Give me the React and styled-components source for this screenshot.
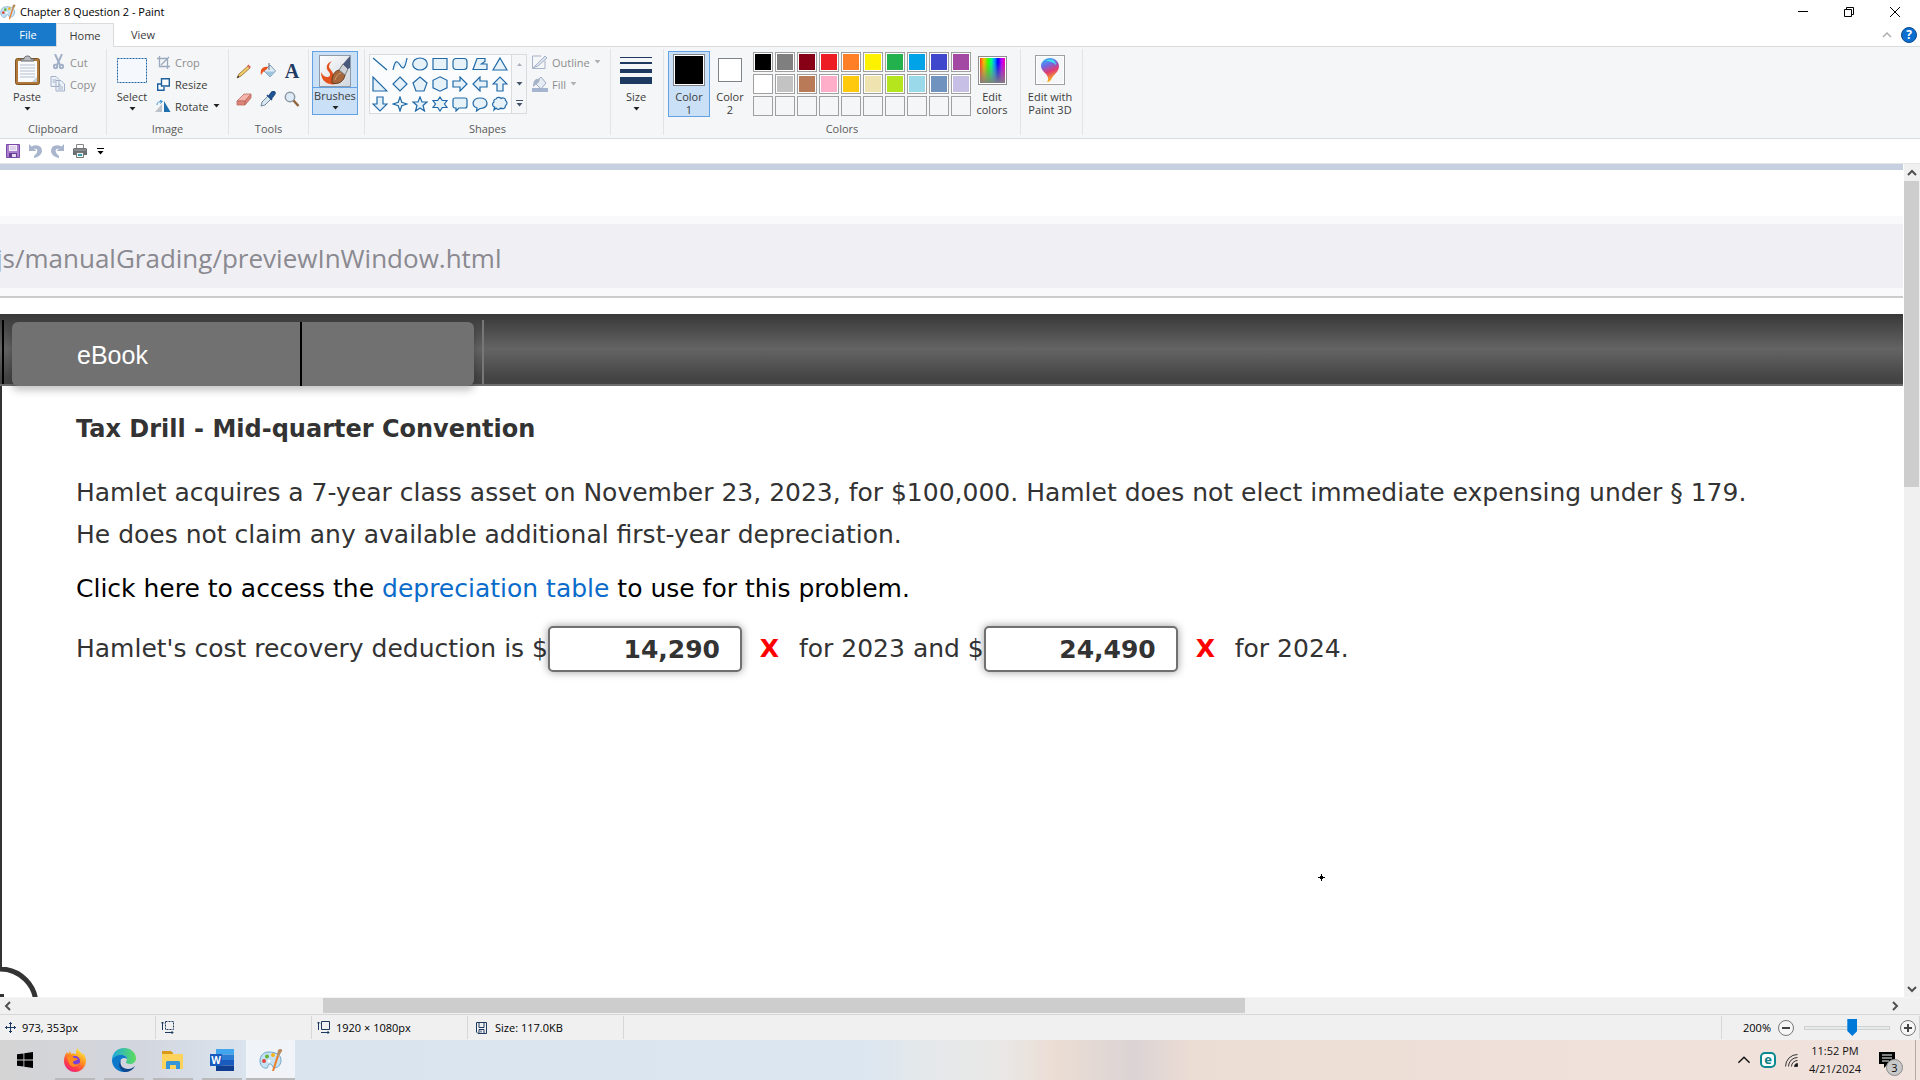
import React from "react";
import styled, { createGlobalStyle, css } from "styled-components";

const ui = '"Open Sans", "Noto Sans", sans-serif';
const page = '"DejaVu Sans", sans-serif';

const GlobalStyle = createGlobalStyle`
  *, *::before, *::after { box-sizing: border-box; }
  body { margin: 0; overflow: hidden; background: #fff; }
  button { font: inherit; color: inherit; background: none; border: 0; padding: 0; margin: 0; }
  h1, p { margin: 0; font: inherit; }
  svg { display: block; flex: none; }
`;

const Window = styled.div`
  display: flex;
  flex-direction: column;
  height: 100vh;
  font-family: ${ui};
  font-size: 11px;
  color: #1e1e1e;
  background: #fff;
`;

/* Title bar */
const TitleBar = styled.header`
  display: flex;
  align-items: center;
  flex: none;
  height: 23px;
  padding-right: 2px;
  gap: 4px;
`;
const WindowTitle = styled.h1`
  flex: 1;
  color: #000;
`;
const Controls = styled.div`
  display: flex;
`;
const ControlButton = styled.button`
  display: flex;
  align-items: center;
  justify-content: center;
  width: 46px;
  height: 21px;
`;

/* Ribbon tabs */
const TabBar = styled.nav`
  display: flex;
  align-items: stretch;
  flex: none;
  height: 24px;
  border-bottom: 1px solid #dadbdc;
`;
const Tab = styled.button`
  width: ${(p) => (p.$file ? 56 : 58)}px;
  color: ${(p) => (p.$file ? "#fff" : "#3b3b3b")};
  ${(p) => p.$file && css`background: #1979ca;`}
  ${(p) =>
    p.$active &&
    css`
      background: #f5f6f7;
      border: 1px solid #dadbdc;
      border-bottom: 0;
      margin-bottom: -1px;
    `}
`;
const TabTools = styled.div`
  display: flex;
  align-items: center;
  gap: 9px;
  margin-left: auto;
  padding-right: 3px;
`;
const HelpButton = styled.button`
  width: 16px;
  height: 16px;
  border-radius: 50%;
  border: 1px solid #0a4a8c;
  background: #0a6fd0;
  color: #fff;
  font-weight: 700;
  font-size: 12px;
  line-height: 14px;
`;

/* Ribbon */
const Ribbon = styled.div`
  display: flex;
  flex: none;
  height: 92px;
  padding: 2px 0 3px;
  background: #f5f6f7;
  border-bottom: 1px solid #dadbdc;
`;
const Group = styled.section`
  display: flex;
  flex-direction: column;
  width: ${(p) => p.$w}px;
  padding-top: 2px;
  border-right: 1px solid #e2e3e4;
`;
const GroupBody = styled.div`
  display: flex;
  flex: 1;
  padding: 0 ${(p) => p.$pad || 3}px;
  gap: ${(p) => p.$gap || 0}px;
`;
const GroupLabel = styled.div`
  line-height: 12px;
  text-align: center;
  color: #5a5a5a;
`;
const BigButton = styled.button`
  display: flex;
  flex-direction: column;
  align-items: center;
  width: ${(p) => p.$w || 44}px;
  height: ${(p) => (p.$split ? 64 : 66)}px;
  padding-top: 2px;
  line-height: 13px;
  color: #3b3b3b;
  border: 1px solid ${(p) => (p.$on ? "#62a2e4" : "transparent")};
  background: ${(p) => (p.$on ? "#c9e0f7" : "none")};
`;
const BigIcon = styled.span`
  display: flex;
  align-items: center;
  justify-content: center;
  width: 100%;
  height: ${(p) => (p.$split ? 35 : 32)}px;
  margin-bottom: ${(p) => (p.$split ? 1 : 4)}px;
  ${(p) => p.$split && css`border-bottom: 1px solid #62a2e4;`}
`;
const ArrowLine = styled.span`
  display: flex;
  align-items: center;
  height: 12px;
`;
const SmallColumn = styled.div`
  display: flex;
  flex-direction: column;
  padding-left: ${(p) => p.$left || 0}px;
`;
const SmallButton = styled.button`
  display: flex;
  align-items: center;
  gap: 4px;
  height: 22px;
  white-space: nowrap;
  color: ${(p) => (p.$off ? "#8d8d8d" : "#3b3b3b")};
`;
const IconSlot = styled.span`
  display: flex;
  justify-content: center;
  width: 16px;
`;
const ToolGrid = styled.div`
  display: grid;
  grid-template-columns: repeat(3, 24px);
  grid-auto-rows: 28px;
  padding-top: 6px;
`;
const ToolButton = styled.button`
  display: flex;
  align-items: center;
  justify-content: center;
`;
const Gallery = styled.div`
  display: flex;
  width: 158px;
  height: 60px;
  margin-top: 3px;
  background: #fbfcfd;
  border: 1px solid #dadbdc;
`;
const ShapeGrid = styled.div`
  display: grid;
  flex: 1;
  grid-template-columns: repeat(7, 20px);
  grid-auto-rows: 20px;
  margin-top: -1px;
`;
const GalleryScroll = styled.div`
  display: flex;
  flex-direction: column;
  width: 15px;
  background: #f5f6f7;
  border-left: 1px solid #dadbdc;
`;
const GalleryStep = styled.button`
  display: flex;
  align-items: center;
  justify-content: center;
  flex: 1;
`;
const Chip = styled.span`
  width: ${(p) => p.$size}px;
  height: ${(p) => p.$size}px;
  border: 1px solid #808488;
  background: ${(p) => p.$c};
  box-shadow: inset 0 0 0 1px #fff;
`;
const Palette = styled.div`
  display: grid;
  grid-template-columns: repeat(10, 20px);
  grid-auto-rows: 20px;
  gap: 2px;
  padding-top: 1px;
`;
const Swatch = styled.button`
  border: 1px solid #a0a0a0;
  background: ${(p) => p.$c || "#f5f6f7"};
  box-shadow: inset 0 0 0 1px ${(p) => (p.$c ? "#fff" : "#f5f6f7")};
`;
const Spectrum = styled.span`
  width: 29px;
  height: 29px;
  border: 1px solid #8f8f8f;
  outline: 1px solid #fff;
  outline-offset: -2px;
  background:
    linear-gradient(transparent 20%, #808080),
    linear-gradient(90deg, #f22, #fb0 18%, #3f0 34%, #0f8 46%, #09f 58%, #00f 70%, #b0f 84%, #f08);
`;
const Frame3D = styled.span`
  display: flex;
  align-items: center;
  justify-content: center;
  width: 30px;
  height: 30px;
  border: 1px solid #a0a0a0;
  background: #f5f6f7;
  box-shadow: inset 0 0 0 1px #fff;
`;

/* Quick access */
const QuickBar = styled.div`
  display: flex;
  align-items: center;
  flex: none;
  gap: 9px;
  height: 25px;
  padding-left: 6px;
  border-bottom: 1px solid #e4e5e6;
`;

/* Workspace */
const Workspace = styled.main`
  display: flex;
  flex: 1;
  min-height: 0;
`;
const Canvas = styled.div`
  position: relative;
  flex: 1;
  min-width: 0;
  overflow: hidden;
  border-top: 6px solid #c7d0e1;
  background: #fff;
`;
const ScrollV = styled.div`
  display: flex;
  flex-direction: column;
  align-items: center;
  width: 17px;
  border-left: 1px solid #fff;
  background: #f0f0f0;
`;
const ScrollH = styled.div`
  display: flex;
  align-items: center;
  flex: none;
  height: 17px;
  padding-right: 17px;
  background: #f0f0f0;
  border-top: 1px solid #f5f5f5;
`;
const ScrollStep = styled.button`
  display: flex;
  align-items: center;
  justify-content: center;
  width: 16px;
  height: 17px;
  flex: none;
`;
const ScrollTrack = styled.div`
  display: flex;
  flex: 1;
  flex-direction: ${(p) => (p.$v ? "column" : "row")};
  align-self: stretch;
`;
const ScrollThumb = styled.div`
  flex: none;
  background: #cdcdcd;
  ${(p) =>
    p.$v
      ? css`height: 38.3%; width: 15px;`
      : css`width: 49.3%; height: 15px; margin-left: 16.4%;`}
`;

/* Picture on the canvas */
const AddressStrip = styled.div`
  display: flex;
  align-items: center;
  height: 82px;
  margin-top: 46px;
  border-top: 8px solid #f9f9fb;
  border-bottom: 2px solid #ccc;
  background: linear-gradient(#f0f0f4 64px, #f9f9fb 64px);
  padding-bottom: 4px;
`;
const Address = styled.span`
  margin-left: -4px;
  font-size: 26px;
  line-height: 64px;
  color: #8a8990;
`;
const BookBar = styled.div`
  display: flex;
  height: 72px;
  margin-top: 16px;
  padding: 6px 0 0 2px;
  background: linear-gradient(#383838, #646464 50%, #444 92%);
  border-bottom: 2px solid #6e6e6e;
`;
const BarLine = styled.span`
  width: 2px;
  height: 64px;
  background: ${(p) => p.$c};
`;
const BookTabs = styled.div`
  display: flex;
  width: 462px;
  height: 64px;
  margin: 2px 8px 0;
  border-radius: 6px;
  background: #717171;
  box-shadow: 0 4px 8px rgba(0, 0, 0, 0.25);
`;
const BookTab = styled.button`
  width: 288px;
  padding: 2px 0 0 65px;
  text-align: left;
  font-family: "Liberation Sans", Arial, sans-serif;
  font-size: 25px;
  color: #fff;
`;
const Paper = styled.article`
  display: flex;
  flex-direction: column;
  align-items: flex-start;
  padding: 22px 74px 0;
  margin-bottom: 4px;
  height: 582px;
  border-left: 2px solid #333;
  font-family: ${page};
  font-size: 25px;
  line-height: 42px;
  color: #333;
  white-space: nowrap;
`;
const Heading = styled.h2`
  margin: 0 0 22px;
  font-size: 24px;
  font-weight: 700;
`;
const Note = styled.p`
  margin-top: 12px;
  color: #000;
`;
const Link = styled.a`
  color: #0a6bcb;
  text-decoration: none;
`;
const AnswerRow = styled.div`
  display: flex;
  align-items: center;
  margin-top: 16px;
`;
const AnswerInput = styled.input`
  width: 194px;
  height: 46px;
  padding: 0 20px;
  border: 2px solid #707070;
  border-radius: 5px;
  box-shadow: 0 0 8px rgba(0, 0, 0, 0.4);
  font: 700 25px ${page};
  color: #333;
  text-align: right;
`;
const Wrong = styled.span`
  width: 57px;
  text-align: center;
  padding-right: 2px;
  font-weight: 700;
  color: #f00;
`;
const Overlay = styled.svg`
  position: absolute;
  ${(p) => p.$corner && css`left: 0; bottom: 0;`}
  ${(p) => p.$cursor && css`left: 1318px; top: 704px;`}
`;

/* Status bar */
const StatusBar = styled.footer`
  display: flex;
  flex: none;
  height: 26px;
  padding: 1px 0;
  border-top: 1px solid #d7d7d7;
  background: #f0f0f0;
  color: #000;
`;
const StatusCell = styled.div`
  display: flex;
  align-items: center;
  gap: 6px;
  width: 156px;
  padding-left: 5px;
  border-right: 1px solid #d7d7d7;
`;
const ZoomCell = styled.div`
  display: flex;
  align-items: center;
  gap: 7px;
  margin-left: auto;
  padding: 0 3px 0 21px;
  border-left: 1px solid #d7d7d7;
  border-right: 1px solid #d7d7d7;
`;
const ZoomSlider = styled.input`
  appearance: none;
  width: 86px;
  height: 18px;
  margin: 0 3px;
  background:
    linear-gradient(#e7eaea, #e7eaea) center / 84px 2px no-repeat,
    linear-gradient(#d0d0d0, #d0d0d0) center / 100% 4px no-repeat;
  &::-webkit-slider-thumb {
    appearance: none;
    width: 10px;
    height: 17px;
    background: #0078d7;
    clip-path: polygon(0 0, 100% 0, 100% 70%, 50% 100%, 0 70%);
  }
`;

/* Taskbar */
const Taskbar = styled.nav`
  display: flex;
  flex: none;
  height: 40px;
  background: linear-gradient(90deg, #d4d4d4, #d2d5de 7%, #dae4ee 13%, #dbe6f0 45%, #e4e8ea 48%, #e9e8e7 52%, #ebddd4 55%, #dbd4d4 59%, #ebdcd4 62%, #efe0d9 80%, #f0e2dc);
  color: #111;
`;
const TaskButton = styled.button`
  display: flex;
  align-items: center;
  justify-content: center;
  width: ${(p) => (p.$open || p.$active ? 49 : 50)}px;
  ${(p) =>
    p.$open &&
    css`
      background: linear-gradient(#b8babc, #b8babc) bottom / 40px 2px no-repeat;
    `}
  ${(p) =>
    p.$active &&
    css`
      background: #f0f4f9;
      border-bottom: 2px solid #b8babc;
      padding-top: 2px;
    `}
`;
const Tray = styled.div`
  display: flex;
  align-items: center;
  gap: 9px;
  margin-left: auto;
  padding-right: 4px;
`;
const Clock = styled.div`
  width: 56px;
  text-align: center;
  line-height: 18px;
`;
const Notify = styled.button`
  position: relative;
  width: 44px;
  height: 40px;
  padding-left: 7px;
  border-right: 1px solid #b5aaa6;
`;
const Badge = styled.span`
  position: absolute;
  left: 14px;
  top: 19px;
  width: 17px;
  height: 17px;
  border: 1px solid #8a8a8a;
  border-radius: 50%;
  background: #c9c9c9;
  line-height: 15px;
`;

/* Icons */
const Down = ({ c = "#222" }) => (
  <svg width="7" height="4"><path d="M0.500 0h6L3.500 3.500z" fill={c} /></svg>
);
const Chevron = ({ turn = 0, size = 10, c = "#505050", w = 2 }) => (
  <svg width={size} height={size} viewBox="0 0 10 10">
    <path d="M1 7l4-4 4 4" fill="none" stroke={c} strokeWidth={w} transform={`rotate(${turn} 5 5)`} />
  </svg>
);
const PaintIcon = ({ s = 16 }) => (
  <svg width={s} height={s} viewBox="0 0 24 24">
    <path d="M10 4C4 4 1 8 1 13c0 5 4 8 7 7 2-1 0-4 3-4 3 0 2 5 5 4 4-1 6-4 6-8 0-5-5-8-12-8z" fill="#c4e2f3" stroke="#6fa6c8" />
    <circle cx="5" cy="13" r="2" fill="#e2453b" /><circle cx="8" cy="8.500" r="2" fill="#63b33b" />
    <circle cx="14" cy="7" r="2" fill="#f4b41d" /><circle cx="10" cy="13" r="1.500" fill="#fff" />
    <path d="M13 23l5-16 2 1-5 15z" fill="#ec7f2c" /><path d="M18 7l1-5c2-2 5-1 4 1l-3 5z" fill="#b98b5e" />
  </svg>
);
const PasteIcon = () => (
  <svg width="25" height="31" viewBox="0 0 25 31">
    <rect x="0.500" y="3.500" width="24" height="26" rx="2" fill="#b0793a" stroke="#7d5424" />
    <path d="M3 6h19v21H3z" fill="#f8fafc" />
    <path d="M5 10h15M5 13h15M5 16h15M5 19h15M5 22h15" stroke="#b4c0d0" />
    <path d="M17 27l5-5v5z" fill="#c3cedd" />
    <path d="M6 6V4h3c0-4 7-4 7 0h3v2z" fill="#b8bcc2" stroke="#666" />
  </svg>
);
const CutIcon = () => (
  <svg width="11" height="16" viewBox="0 0 11 16" fill="none" stroke="#a3b1c8" strokeWidth="2">
    <path d="M2 0l5 11M9 0L4 11" /><circle cx="2.500" cy="12.500" r="1.700" /><circle cx="8.500" cy="12.500" r="1.700" />
  </svg>
);
const CopyIcon = () => (
  <svg width="16" height="16" viewBox="0 0 16 16" fill="#edf2f9" stroke="#a3b1c8">
    <path d="M1 .5h5l3 3v7H1zM6 4.500h5l3.500 3.500v7H6z" /><path d="M2.500 4h4M2.500 6h3M8 9h3M8 11h5M8 13h5" />
  </svg>
);
const CropIcon = () => (
  <svg width="13" height="13" viewBox="0 0 13 13" fill="none" stroke="#9ba9bd" strokeWidth="1.300">
    <path d="M2.500 0v10.500H13M0 2.500h10.500V13M4 9l8-8" />
  </svg>
);
const ResizeIcon = () => (
  <svg width="13" height="13" viewBox="0 0 13 13" fill="#fff" stroke="#1c5f9c" strokeWidth="1.400">
    <path d="M4 6H.7v6.300H7V9" /><path d="M4.500.7h7.800V8H4.500z" />
  </svg>
);
const RotateIcon = () => (
  <svg width="16" height="13" viewBox="0 0 16 13">
    <path d="M7 4v8H0z" fill="#bcc3ca" /><path d="M9 1l6.500 11H9z" fill="#1e6fae" />
    <path d="M2 5c0-3 2-3.500 5-3.500M5 0l2.500 1.500L5 3.500" fill="none" stroke="#3a94d8" />
  </svg>
);
const tools = {
  Pencil: <><path d="M1 15l2-4 9-8 2 2-9 8z" fill="#f3cc6a" stroke="#8e6a2e" strokeWidth=".8" /><path d="M11 3l1.500-1.500 2.500 2.500L13.500 5.500z" fill="#dc6b5b" /><path d="M1 15l1-2.500 1.500 1.500z" fill="#333" /></>,
  "Fill with color": <><path d="M4 8l6-6 5.500 6L10 14z" fill="#e0ecf5" stroke="#6d8ca8" strokeWidth=".9" /><path d="M4.500 8.500h10.500L10 14z" fill="#9dc3df" /><path d="M9 0v7" stroke="#667" /><path d="M8 4C2 3 0 7 1 12l2-3 4-3z" fill="#e9531f" /></>,
  Eraser: <><path d="M1 10l7-7h7l-6 7z" fill="#f4b6ac" stroke="#bd6c62" strokeWidth=".8" /><path d="M1 10h8v4H1zM9 10l6-7v4l-6 7z" fill="#dd8377" stroke="#bd6c62" strokeWidth=".8" /></>,
  "Color picker": <><path d="M1 15l1-4 6-6 3 3-6 6z" fill="#d9e7f2" stroke="#667c92" strokeWidth=".9" /><path d="M7 4l5 5M9 5l3-4c3-1 4 1 2 3l-3 4z" fill="#23589a" stroke="#1d4c86" strokeWidth="1.500" /></>,
  Magnifier: <><circle cx="6" cy="6" r="4.700" fill="#dcebf6" stroke="#8d9aa6" strokeWidth="1.500" /><path d="M9.500 9.500L14.500 15" stroke="#94643a" strokeWidth="2.500" /></>,
};
const Tool = ({ name }) => (
  <ToolButton aria-label={name}>
    <svg width="16" height="16" viewBox="0 0 16 16">{tools[name]}</svg>
  </ToolButton>
);
const TextTool = styled(ToolButton)`
  font: 700 20px "Liberation Serif", serif;
  color: #1f3b63;
`;
const BrushIcon = () => (
  <svg width="32" height="32" viewBox="0 0 32 32">
    <defs><linearGradient id="br" x2="1" y2="1"><stop stopColor="#fff" /><stop offset="1" stopColor="#cfd6dd" /></linearGradient></defs>
    <rect x=".5" y=".5" width="31" height="31" fill="url(#br)" stroke="#8f9aa6" />
    <path d="M13 6C6 9 7 14 10 17c2 3 1 5-2 5-3 0-5-3-6-5 0 6 3 11 9 12 4 1 7 0 8-3l-5-5c1-4-3-6-4-9 0-2 1-4 3-6z" fill="#e4521d" />
    <path d="M13 28c-1-7 3-13 8-13l5 5c-1 6-6 10-13 8z" fill="#a5673b" stroke="#6b3d1d" />
    <path d="M16 25c1-4 3-6 6-7" fill="none" stroke="#d09a6a" />
    <path d="M20 15l4-6 5 5-3 6z" fill="#cfd3d7" stroke="#777" /><path d="M24 9l7-8v12l-2 1z" fill="#49597c" />
  </svg>
);
const shapes = [
  "M1 2l14 12", "M1 14C3 4 5 4 8 9s5 4 7-7", "M.7 8a7.300 6 0 1 0 14.600 0a7.300 6 0 1 0-14.600 0", "M1 2.500h14v11H1z",
  "M4 2.500h8a3 3 0 0 1 3 3v5a3 3 0 0 1-3 3H4a3 3 0 0 1-3-3v-5a3 3 0 0 1 3-3z", "M5 2.500h8v3L9.500 8H15v5.500H1z", "M8 2l7 12H1z",
  "M1 1v14h14z", "M8 1l7 7-7 7-7-7z", "M8 1l7 6-3 8H4L1 7z", "M8 .8l7 3.500v7.500L8 15.200 1 11.800V4.300z",
  "M1 5h7V1l7 7-7 7v-4H1z", "M15 5H8V1L1 8l7 7v-4h7z", "M5 15V8H1l7-7 7 7h-4v7z",
  "M5 1v7H1l7 7 7-7h-4V1z", "M8 1l1.800 5.200L15 8l-5.200 1.800L8 15l-1.800-5.200L1 8l5.200-1.800z",
  "M8 1l2 5h5l-4 3.500 1.500 5.500L8 12l-4.500 3L5 9.500 1 6h5z", "M8 1l2.300 3.500H15L12.500 8l2.500 3.500h-4.700L8 15l-2.300-3.500H1L3.500 8 1 4.500h4.700z",
  "M3 2h10a2 2 0 0 1 2 2v6a2 2 0 0 1-2 2H7l-3 3v-3H3a2 2 0 0 1-2-2V4a2 2 0 0 1 2-2z",
  "M5 12C-1 10 0 2 8 2s10 9 1 10.500H8L4.500 15z", "M4 3c1-2 4-2 5-.5 2-1.500 5 0 4.500 2 2 1 2 4 0 5 0 3-3 4-4.500 2.500-2 2-4 1.500-5 0l-2 2 .5-3C0 10 0 7 2 6c-.5-2 .5-3 2-3z",
];
const Shape = ({ d }) => (
  <ToolButton aria-label="Shape">
    <svg width="16" height="16" viewBox="0 0 16 16"><path d={d} fill="#e6f2f8" stroke="#1f69a8" strokeWidth="1.200" /></svg>
  </ToolButton>
);
const OutlineIcon = () => (
  <svg width="16" height="14" viewBox="0 0 16 14" fill="none" stroke="#a5b2c8"><path d="M13 6v7.500H.5V1H9" /><path d="M1 13L13 1l2 2-9 8-3 1z" fill="#dbe3ef" /></svg>
);
const FillIcon = () => (
  <svg width="16" height="16" viewBox="0 0 16 16"><path d="M0 12h16v4H0z" fill="#a5b5d0" /><path d="M3 7l6-6 5 6-5 6z" fill="#e6ecf4" stroke="#9dabc3" /><path d="M8 3C3 2 1 5 1 11l6-5z" fill="#a5b2c8" /></svg>
);
const SizeIcon = () => (
  <svg width="32" height="28" fill="#1f3a60"><path d="M0 1h32v1H0zM0 6h32v2H0zM0 13h32v4H0zM0 21h32v7H0z" /></svg>
);
const Pin3D = () => (
  <svg width="18" height="24" viewBox="0 0 18 24">
    <defs><linearGradient id="pin" x2=".3" y2="1"><stop stopColor="#21c5ee" /><stop offset=".35" stopColor="#6b6ce8" /><stop offset=".65" stopColor="#e03a74" /><stop offset="1" stopColor="#f9b21b" /></linearGradient></defs>
    <path d="M9 0c5 0 9 4 9 8 0 6-5 8-7 12-1 2-2 4-5 4 2-3 1-5-1-8C2 13 0 11 0 8c0-4 4-8 9-8z" fill="url(#pin)" /><path d="M5 3c4-3 10-1 10 4-3-3-6-4-10-4z" fill="#45e0ee" />
  </svg>
);
const SaveIcon = () => (
  <svg width="14" height="14" viewBox="0 0 14 14"><path d="M.5.5h13v13H.5z" fill="#a77fcb" stroke="#7a48a6" /><path d="M3 1h8v6H3z" fill="#f3eef8" /><path d="M4 3h6M4 5h6" stroke="#c9b8dc" /><path d="M3 9h8v4H3z" fill="#6b3c96" /><path d="M6 10h4v3H6z" fill="#e6dcf0" /></svg>
);
const UndoIcon = ({ flip }) => (
  <svg width="13" height="14" viewBox="0 0 13 14"><path d="M0 0v7h7.500L5 4.800C9 4 10 8 5 12v2c7-1.500 9-6 7.500-9.500C11 1 6 .5 2.500 2.500z" fill="#a8b5cd" transform={flip ? "translate(13 0) scale(-1 1)" : undefined} /></svg>
);
const PrintIcon = () => (
  <svg width="14" height="14" viewBox="0 0 14 14"><path d="M3.500.5h7V5h-7z" fill="#fff" stroke="#888" /><path d="M1 4h12l1 1v6H0V5z" fill="#6b6f72" /><path d="M1 6h12" stroke="#a5a8aa" /><path d="M3.500 8.500h7v5h-7z" fill="#eef5f0" stroke="#777" /><path d="M5 10h4v2H5z" fill="#3a9bb0" /></svg>
);
const MoveIcon = () => (
  <svg width="11" height="11" viewBox="0 0 11 11" stroke="#1f3a60" fill="none"><path d="M5.500 0v11M0 5.500h11M4 2l1.500-1.500L7 2M4 9l1.500 1.500L7 9M2 4L.5 5.500 2 7M9 4l1.500 1.500L9 7" /></svg>
);
const DimIcon = ({ dashed }) => (
  <svg width="13" height="13" viewBox="0 0 13 13" stroke="#1f3a60" fill="none"><path d="M4.500.5h8v8h-8z" strokeDasharray={dashed ? "2 1" : undefined} /><path d="M1.500 9V1M0 2.500L1.500 1 3 2.500M4 11.500h8M10.500 10l1.500 1.500-1.500 1.500" /></svg>
);
const DiskIcon = () => (
  <svg width="11" height="12" viewBox="0 0 11 12" stroke="#1f3a60" fill="none"><path d="M.5.5h10v11H2l-1.500-1.500zM3 .5v5h5v-5M3 11.500v-4h5v4M5 8.500v2" /></svg>
);
const ZoomIcon = ({ plus }) => (
  <svg width="16" height="16" viewBox="0 0 16 16"><circle cx="8" cy="8" r="7.500" fill="#f6f6f6" stroke="#777" /><path d={plus ? "M4 8h8M8 4v8" : "M4 8h8"} stroke="#444" strokeWidth="2" /></svg>
);
const StartIcon = () => (
  <svg width="16" height="16" viewBox="0 0 16 16" fill="#000"><path d="M0 2.300L6.500 1.400v6.200H0zM7.300 1.300L16 0v7.600H7.300zM0 8.400h6.500v6.200L0 13.700zM7.300 8.400H16V16l-8.700-1.300z" /></svg>
);
const FirefoxIcon = () => (
  <svg width="24" height="24" viewBox="0 0 24 24">
    <defs><linearGradient id="ff" x1=".8" x2=".2" y2="1"><stop stopColor="#fff14a" /><stop offset=".4" stopColor="#ff9a1e" /><stop offset=".75" stopColor="#ff3b48" /><stop offset="1" stopColor="#e0218c" /></linearGradient></defs>
    <path d="M15 0c0 3 3 4 5 7 0-1-.3-2-.6-2.500C22 7 23 10 23 13c0 6-5 11-11 11S1 19 1 13c0-4 1-6 3-9l1 2 2-3 1 3c2-1 4 0 5 0 0-3 0-4 2-6z" fill="url(#ff)" />
    <circle cx="12" cy="13" r="5" fill="#7a3ddb" /><path d="M4 9c3-2 6-1 7 1 2 0 3 0 4 1-1 2-4 1-5 3 0 3 4 3 6 1-1 5-9 5-10 0-1-2-1-3-2-6z" fill="#ff8a1e" />
  </svg>
);
const EdgeIcon = () => (
  <svg width="24" height="24" viewBox="0 0 24 24">
    <defs><linearGradient id="eg" y1=".5" y2=".5"><stop stopColor="#1ea9e0" /><stop offset="1" stopColor="#5ddc5a" /></linearGradient></defs>
    <path d="M0 12C0 5 5 0 12 0s12 5 12 10c0 4-3 6-6 6-3 0-4-1-4-2s1-1 1-3-2-4-5-4c-5 0-9 3-10 5z" fill="url(#eg)" />
    <path d="M0 12c1-3 5-5 9-5 4 0 6 2 6 4-1-1-2-1-3-1-3 0-4 3-4 5 0 4 3 8 7 9C7 25 0 20 0 12z" fill="#0b78c9" />
    <path d="M9 12c-2 5 2 9 7 9 3 0 5-1 7-3-2 4-6 6-10 6-5-1-8-7-4-12z" fill="#10488f" />
  </svg>
);
const FolderIcon = () => (
  <svg width="22" height="19" viewBox="0 0 22 19"><path d="M0 0h9l2 2v3H0z" fill="#d99b17" /><path d="M0 3h21v15H0z" fill="#fdd35c" /><path d="M4 18v-7l1-1h12l1 1v7h-4v-4H8v4z" fill="#3495d8" /></svg>
);
const WordIcon = () => (
  <svg width="24" height="22" viewBox="0 0 24 22"><path d="M6 0h18v5.500H6z" fill="#41a5ee" /><path d="M6 5.500h18V11H6z" fill="#2b7cd3" /><path d="M6 11h18v5.500H6z" fill="#185abd" /><path d="M6 16.500h18V22H6z" fill="#103f91" /><path d="M0 5h12v12H0z" fill="#185abd" /><text x="6" y="14.500" textAnchor="middle" fontFamily="Open Sans, sans-serif" fontWeight="700" fontSize="10" fill="#fff">W</text></svg>
);
const ShieldE = () => (
  <svg width="16" height="16" viewBox="0 0 16 16"><rect x="1" y="1" width="14" height="14" rx="4" fill="#fff" stroke="#0a8a90" strokeWidth="2" /><text x="8" y="12" textAnchor="middle" fontFamily="Open Sans, sans-serif" fontWeight="700" fontSize="13" fill="#0a7f86">e</text></svg>
);
const WifiIcon = () => (
  <svg width="13" height="13" viewBox="0 0 13 13" fill="none" stroke="#333"><path d="M.5 12.500A12 12 0 0 1 12.500.5M3.500 12.500a9 9 0 0 1 9-9M6.500 12.500a6 6 0 0 1 6-6" /><path d="M9.500 12.500a3 3 0 0 1 3-3v3z" fill="#111" /></svg>
);

const colors = [
  "#000000", "#7f7f7f", "#880015", "#ed1c24", "#ff7f27", "#fff200", "#22b14c", "#00a2e8", "#3f48cc", "#a349a4",
  "#ffffff", "#c3c3c3", "#b97a57", "#ffaec9", "#ffc90e", "#efe4b0", "#b5e61d", "#99d9ea", "#7092be", "#c8bfe7",
  ...Array(10).fill(null),
];

export default function App() {
  return (
    <Window>
      <GlobalStyle />
      <TitleBar>
        <PaintIcon />
        <WindowTitle>Chapter 8 Question 2 - Paint</WindowTitle>
        <Controls>
          <ControlButton aria-label="Minimize"><svg width="10" height="1"><path d="M0 0h10v1H0z" /></svg></ControlButton>
          <ControlButton aria-label="Restore"><svg width="10" height="10" fill="none" stroke="#000"><path d="M.5 2.500h7v7h-7zM2.500 2.500v-2h7v7h-2" /></svg></ControlButton>
          <ControlButton aria-label="Close"><svg width="10" height="10" stroke="#000"><path d="M0 0l10 10M10 0L0 10" /></svg></ControlButton>
        </Controls>
      </TitleBar>
      <TabBar>
        <Tab $file>File</Tab>
        <Tab $active>Home</Tab>
        <Tab>View</Tab>
        <TabTools>
          <Chevron size={10} c="#aaa" w={1.4} />
          <HelpButton aria-label="Help">?</HelpButton>
        </TabTools>
      </TabBar>

      <Ribbon>
        <Group $w={107}>
          <GroupBody $pad={5}>
            <BigButton><BigIcon><PasteIcon /></BigIcon>Paste<ArrowLine><Down /></ArrowLine></BigButton>
            <SmallColumn $left={1}>
              <SmallButton $off><IconSlot><CutIcon /></IconSlot>Cut</SmallButton>
              <SmallButton $off><IconSlot><CopyIcon /></IconSlot>Copy</SmallButton>
            </SmallColumn>
          </GroupBody>
          <GroupLabel>Clipboard</GroupLabel>
        </Group>
        <Group $w={122}>
          <GroupBody>
            <BigButton>
              <BigIcon><svg width="30" height="25"><rect x=".5" y=".5" width="29" height="24" fill="#f5f9fd" stroke="#1b63a5" strokeDasharray="2 1" /></svg></BigIcon>
              Select<ArrowLine><Down /></ArrowLine>
            </BigButton>
            <SmallColumn $left={1}>
              <SmallButton $off><IconSlot><CropIcon /></IconSlot>Crop</SmallButton>
              <SmallButton><IconSlot><ResizeIcon /></IconSlot>Resize</SmallButton>
              <SmallButton><IconSlot><RotateIcon /></IconSlot>Rotate<Down /></SmallButton>
            </SmallColumn>
          </GroupBody>
          <GroupLabel>Image</GroupLabel>
        </Group>
        <Group $w={80}>
          <GroupBody>
            <ToolGrid>
              <Tool name="Pencil" />
              <Tool name="Fill with color" />
              <TextTool>A</TextTool>
              <Tool name="Eraser" />
              <Tool name="Color picker" />
              <Tool name="Magnifier" />
            </ToolGrid>
          </GroupBody>
          <GroupLabel>Tools</GroupLabel>
        </Group>
        <Group $w={56}>
          <GroupBody>
            <BigButton $w={46} $on $split><BigIcon $split><BrushIcon /></BigIcon>Brushes<ArrowLine><Down /></ArrowLine></BigButton>
          </GroupBody>
        </Group>
        <Group $w={246}>
          <GroupBody $pad={4} $gap={5}>
            <Gallery>
              <ShapeGrid>{shapes.map((d) => <Shape key={d} d={d} />)}</ShapeGrid>
              <GalleryScroll>
                <GalleryStep aria-label="Previous row"><svg width="5" height="3"><path d="M0 3l2.500-3L5 3z" fill="#a9afb8" /></svg></GalleryStep>
                <GalleryStep aria-label="Next row"><Down c="#44546a" /></GalleryStep>
                <GalleryStep aria-label="More shapes"><svg width="7" height="7"><path d="M0 0h7v1H0zM.5 3h6L3.500 6.500z" fill="#44546a" /></svg></GalleryStep>
              </GalleryScroll>
            </Gallery>
            <SmallColumn>
              <SmallButton $off><OutlineIcon />Outline<Down c="#b0b0b0" /></SmallButton>
              <SmallButton $off><FillIcon />Fill<Down c="#b0b0b0" /></SmallButton>
            </SmallColumn>
          </GroupBody>
          <GroupLabel>Shapes</GroupLabel>
        </Group>
        <Group $w={53}>
          <GroupBody>
            <BigButton><BigIcon><SizeIcon /></BigIcon>Size<ArrowLine><Down /></ArrowLine></BigButton>
          </GroupBody>
        </Group>
        <Group $w={357}>
          <GroupBody $pad={4}>
            <BigButton $w={42} $on><BigIcon><Chip $size={32} $c="#000" /></BigIcon>Color<br />1</BigButton>
            <BigButton $w={40}><BigIcon><Chip $size={24} $c="#fff" /></BigIcon>Color<br />2</BigButton>
            <SmallColumn $left={3}>
              <Palette>{colors.map((c, i) => <Swatch key={i} $c={c} aria-label={c || "Empty color"} />)}</Palette>
            </SmallColumn>
            <BigButton $w={42}><BigIcon><Spectrum /></BigIcon>Edit<br />colors</BigButton>
          </GroupBody>
          <GroupLabel>Colors</GroupLabel>
        </Group>
        <Group $w={62}>
          <GroupBody>
            <BigButton $w={52}><BigIcon><Frame3D><Pin3D /></Frame3D></BigIcon>Edit with Paint 3D</BigButton>
          </GroupBody>
        </Group>
      </Ribbon>

      <QuickBar>
        <ToolButton aria-label="Save"><SaveIcon /></ToolButton>
        <ToolButton aria-label="Undo"><UndoIcon /></ToolButton>
        <ToolButton aria-label="Redo"><UndoIcon flip /></ToolButton>
        <ToolButton aria-label="Print"><PrintIcon /></ToolButton>
        <ToolButton aria-label="Customize"><svg width="9" height="7"><path d="M1 0h7v1H1zM1.500 3h6L4.500 6.500z" /></svg></ToolButton>
      </QuickBar>

      <Workspace>
        <Canvas>
          <AddressStrip><Address>js/manualGrading/previewInWindow.html</Address></AddressStrip>
          <BookBar>
            <BarLine $c="#000" />
            <BookTabs>
              <BookTab>eBook</BookTab>
              <BarLine $c="#000" />
            </BookTabs>
            <BarLine $c="#777" />
          </BookBar>
          <Paper>
            <Heading>Tax Drill - Mid-quarter Convention</Heading>
            <p>
              Hamlet acquires a 7-year class asset on November 23, 2023, for $100,000. Hamlet does not elect immediate expensing under § 179.
              <br />
              He does not claim any available additional first-year depreciation.
            </p>
            <Note>Click here to access the <Link href="#table">depreciation table</Link> to use for this problem.</Note>
            <AnswerRow>
              <label htmlFor="y2023">Hamlet's cost recovery deduction is $</label>
              <AnswerInput id="y2023" defaultValue="14,290" />
              <Wrong>X</Wrong>
              <label htmlFor="y2024">for 2023 and $</label>
              <AnswerInput id="y2024" defaultValue="24,490" />
              <Wrong>X</Wrong>
              <span>for 2024.</span>
            </AnswerRow>
          </Paper>
          <Overlay $corner width="40" height="30"><circle cx="0" cy="38" r="36" fill="#fff" stroke="#333" strokeWidth="5" /><path d="M0 27h4v3H0z" fill="#333" /></Overlay>
          <Overlay $cursor width="7" height="7"><path d="M3 0h1v3h3v1H4v3H3V4H0V3h3z" /><path d="M2 2h3v3H2z" /></Overlay>
        </Canvas>
        <ScrollV>
          <ScrollStep aria-label="Scroll up"><Chevron /></ScrollStep>
          <ScrollTrack $v><ScrollThumb $v /></ScrollTrack>
          <ScrollStep aria-label="Scroll down"><Chevron turn={180} /></ScrollStep>
        </ScrollV>
      </Workspace>
      <ScrollH>
        <ScrollStep aria-label="Scroll left"><Chevron turn={-90} /></ScrollStep>
        <ScrollTrack><ScrollThumb /></ScrollTrack>
        <ScrollStep aria-label="Scroll right"><Chevron turn={90} /></ScrollStep>
      </ScrollH>

      <StatusBar>
        <StatusCell><MoveIcon />973, 353px</StatusCell>
        <StatusCell><DimIcon dashed /></StatusCell>
        <StatusCell><DimIcon />1920 × 1080px</StatusCell>
        <StatusCell><IconSlot><DiskIcon /></IconSlot>Size: 117.0KB</StatusCell>
        <ZoomCell>
          <label htmlFor="zoom">200%</label>
          <ToolButton aria-label="Zoom out"><ZoomIcon /></ToolButton>
          <ZoomSlider id="zoom" type="range" min="0" max="100" defaultValue="57" />
          <ToolButton aria-label="Zoom in"><ZoomIcon plus /></ToolButton>
        </ZoomCell>
      </StatusBar>

      <Taskbar>
        <TaskButton aria-label="Start"><StartIcon /></TaskButton>
        <TaskButton $open aria-label="Firefox"><FirefoxIcon /></TaskButton>
        <TaskButton $open aria-label="Edge"><EdgeIcon /></TaskButton>
        <TaskButton $open aria-label="File Explorer"><FolderIcon /></TaskButton>
        <TaskButton $open aria-label="Word"><WordIcon /></TaskButton>
        <TaskButton $active aria-label="Paint"><PaintIcon s={24} /></TaskButton>
        <Tray>
          <Chevron size={14} c="#111" w={1} />
          <ShieldE />
          <WifiIcon />
          <Clock>11:52 PM<br />4/21/2024</Clock>
          <Notify aria-label="Notifications">
            <svg width="17" height="17" viewBox="0 0 17 17"><path d="M0 0h16v12H9l-4 4v-4H0z" /><path d="M3 3h10M3 6h10M3 9h7" stroke="#fff" /></svg>
            <Badge>3</Badge>
          </Notify>
        </Tray>
      </Taskbar>
    </Window>
  );
}
